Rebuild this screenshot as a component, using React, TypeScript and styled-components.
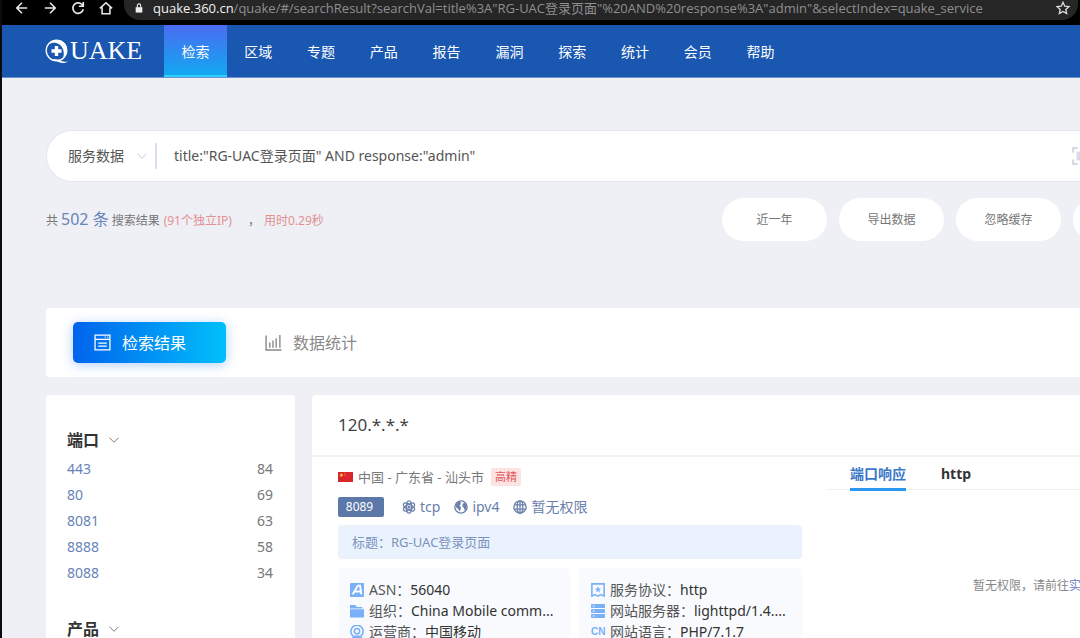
import React from "react";
import styled, { createGlobalStyle, css } from "styled-components";

const GlobalStyle = createGlobalStyle`
  * { box-sizing: border-box; }
  body {
    margin: 0;
    background: #eff0f5;
    color: #666;
    font: 14px/20px "Noto Sans", "Noto Sans CJK SC", sans-serif;
  }
  button, input, select { font: inherit; color: inherit; border: 0; padding: 0; background: none; }
  button { cursor: pointer; }
  a { color: inherit; text-decoration: none; }
  h1, h2, p, ul, dl, dd { margin: 0; padding: 0; font-weight: inherit; font-size: inherit; }
`;

const Page = styled.div`
  height: 100vh;
  overflow: hidden;
  border-left: 2px solid #0b0b0d;
`;

/* Browser bar */
const BrowserBar = styled.div`
  display: flex;
  height: 25px;
  padding: 0 2px 5px 12px;
  background: #000;
  color: #e8e8e8;
`;
const BrowserButtons = styled.div`
  display: flex;
  gap: 12px;
  align-items: center;
  margin-right: 10px;
`;
const BrowserButton = styled.button`
  display: flex;
  align-items: center;
  justify-content: center;
  width: 16px;
  height: 16px;
  margin-top: -4px;
`;
const AddressBar = styled.div`
  display: flex;
  flex: 1;
  min-width: 0;
  align-items: center;
  gap: 9px;
  padding: 0 8px 4px 10px;
  border-radius: 0 0 16px 16px;
  background: #262627;
  color: #8f8f90;
`;
const Address = styled.span`
  flex: 1;
  font: 13px/16px "Open Sans", "Noto Sans CJK SC", sans-serif;
  white-space: nowrap;
  strong { color: #f2f2f2; font-weight: 400; }
`;

/* Site header */
const Header = styled.header`
  display: flex;
  height: 53px;
  background: #1957b0;
  border-bottom: 1px solid #6b93cf;
  color: #fff;
`;
const Logo = styled.a`
  display: flex;
  align-items: center;
  width: 162px;
  padding-left: 42px;
  font: 26px/30px "Liberation Serif", serif;
`;
const Nav = styled.nav`
  display: grid;
  grid-template-columns: repeat(10, 1fr);
  width: 628px;
`;
const NavLink = styled.a<{ $active?: boolean }>`
  display: flex;
  align-items: center;
  justify-content: center;
  padding-top: 1px;
  ${(p) =>
    p.$active &&
    css`
      background: linear-gradient(#4a6cf0, #10aaf2);
      box-shadow: inset 0 -2px #2fd0ff;
    `}
`;

/* Search area */
const Content = styled.main`
  padding: 52px 0 0 44px;
`;
const SearchBox = styled.form`
  display: flex;
  align-items: center;
  height: 52px;
  padding-left: 21px;
  background: #fff;
  border: 1px solid #e6e7ee;
  border-right: 0;
  border-radius: 26px 0 0 26px;
`;
const SelectWrap = styled.label`
  display: flex;
  align-items: center;
  width: 89px;
  height: 26px;
  border-right: 2px solid #dcdfeb;
  color: #c0c4cc;
`;
const TypeSelect = styled.select`
  appearance: none;
  width: 68px;
  color: #555;
  outline: 0;
`;
const QueryInput = styled.input`
  flex: 1;
  padding-left: 17px;
  color: #555;
  outline: 0;
`;
const ScanButton = styled.button`
  width: 8px;
  height: 18px;
  overflow: hidden;
  color: #d5d7e6;
`;

const Summary = styled.div`
  display: flex;
  justify-content: space-between;
  align-items: center;
  margin-top: 16px;
  overflow: hidden;
`;
const Stats = styled.p`
  font-size: 12px;
  color: #777;
  white-space: nowrap;
`;
const Total = styled.span`
  margin: 0 3px;
  font-size: 16px;
  color: #6883b7;
`;
const Warn = styled.span`
  margin-left: 4px;
  color: #e28f92;
`;
const Comma = styled.span`
  margin-left: 16px;
`;
const Actions = styled.div`
  display: flex;
  flex: none;
  gap: 12px;
  margin-right: -98px;
`;
const Pill = styled.button`
  width: 105px;
  height: 43px;
  border-radius: 22px;
  background: #fff;
  font-size: 12px;
  color: #777;
`;

/* View switch */
const ViewTabs = styled.div`
  display: flex;
  gap: 39px;
  margin-top: 67px;
  padding: 14px 0 14px 27px;
  background: #fff;
  border-radius: 4px 0 0 4px;
`;
const ViewTab = styled.button<{ $active?: boolean }>`
  display: flex;
  align-items: center;
  gap: 11px;
  height: 41px;
  font-size: 16px;
  color: #888;
  ${(p) =>
    p.$active &&
    css`
      width: 153px;
      padding-left: 21px;
      color: #fff;
      border-radius: 5px;
      background: linear-gradient(90deg, #0163ec, #01bffb);
      box-shadow: 0 2px 12px rgba(30, 120, 240, 0.35);
    `}
`;

const Columns = styled.div`
  display: flex;
  align-items: flex-start;
  gap: 17px;
  margin-top: 18px;
`;

/* Facets */
const Sidebar = styled.aside`
  flex: none;
  width: 249px;
  padding: 34px 22px 34px 21px;
  background: #fff;
  border-radius: 4px;
`;
const Facet = styled.section`
  margin-bottom: 32px;
`;
const FacetToggle = styled.button`
  display: flex;
  align-items: center;
  gap: 9px;
  height: 22px;
  margin-bottom: 5px;
  font-size: 16px;
  font-weight: 700;
  color: #333;
  svg { color: #777; }
`;
const FacetTable = styled.table`
  width: 100%;
  border-collapse: collapse;
  td { height: 26px; padding: 0; color: #777; }
  td:first-child { color: #6883b7; }
  td:last-child { text-align: right; }
`;

/* Result card */
const Card = styled.article`
  flex: 1;
  min-width: 0;
  background: #fff;
  border-radius: 4px 0 0 4px;
`;
const CardTitle = styled.h2`
  padding: 16px 26px;
  border-bottom: 2px solid #f0f4f9;
  font-size: 17px;
  line-height: 28px;
  color: #444;
`;
const CardBody = styled.div`
  display: flex;
  gap: 25px;
  padding-left: 26px;
`;
const Details = styled.div`
  flex: none;
  width: 464px;
  padding: 10px 0 20px;
`;
const Location = styled.div`
  display: flex;
  align-items: center;
  gap: 5px;
  height: 20px;
  font-size: 13px;
  color: #777;
`;
const Precision = styled.span`
  margin-left: 2px;
  padding: 0 4px;
  border-radius: 2px;
  background: #fde2e2;
  color: #e2575a;
  font-size: 11px;
  line-height: 18px;
`;
const Protocols = styled.div`
  display: flex;
  align-items: center;
  gap: 14px;
  margin-top: 10px;
  color: #6a80ac;
`;
const Port = styled.span`
  width: 46px;
  margin-right: 4px;
  padding-right: 3px;
  border-radius: 2px;
  background: #5b78a9;
  color: #fff;
  font-size: 12px;
  text-align: center;
`;
const Protocol = styled.span`
  display: flex;
  align-items: center;
  gap: 4px;
`;
const PageTitle = styled.p`
  margin-top: 8px;
  padding: 7px 14px;
  border-radius: 4px;
  background: #eaf2fd;
  font-size: 13px;
  color: #7b93be;
`;
const Facts = styled.div`
  display: flex;
  gap: 9px;
  margin-top: 9px;
`;
const FactList = styled.ul<{ $width: number }>`
  width: ${(p) => p.$width}px;
  padding: 11px 12px;
  border-radius: 4px;
  background: #f8fafd;
  list-style: none;
`;
const Fact = styled.li`
  display: flex;
  align-items: center;
  gap: 5px;
  height: 21px;
  color: #555;
  span { overflow: hidden; text-overflow: ellipsis; white-space: nowrap; }
  b { font-weight: 400; color: #333; }
`;

const Response = styled.div`
  flex: 1;
  min-width: 0;
  overflow: hidden;
`;
const ResponseTabs = styled.div`
  display: flex;
  gap: 35px;
  height: 33px;
  padding-left: 23px;
  border-bottom: 1px solid #ecf1f3;
`;
const ResponseTab = styled.button<{ $active?: boolean }>`
  height: 34px;
  padding-top: 2px;
  font-weight: 700;
  color: ${(p) => (p.$active ? "#3a78c8" : "#333")};
  border-bottom: 3px solid ${(p) => (p.$active ? "#2b97f0" : "transparent")};
`;
const Notice = styled.p`
  margin-top: 86px;
  padding-left: 146px;
  font-size: 12px;
  color: #888;
  white-space: nowrap;
  a { color: #6a80c0; }
`;

type IconProps = { size?: number; box?: string; fill?: string; sw?: number; children: React.ReactNode };
const Icon = ({ size = 14, box = "0 0 16 16", fill = "none", sw = 1.3, children }: IconProps) => (
  <IconSvg
    width={size}
    height={size}
    viewBox={box}
    fill={fill}
    stroke={fill === "none" ? "currentColor" : "none"}
    strokeWidth={sw}
    aria-hidden="true"
  >
    {children}
  </IconSvg>
);
const IconSvg = styled.svg`
  flex: none;
`;

const Chevron = () => (
  <Icon size={12}><path d="M2 5l6 6 6-6" /></Icon>
);

const BLUE = "#7ab0f8";

const FlagIcon = () => (
  <svg width="15" height="10" viewBox="0 0 15 10" aria-hidden="true">
    <rect width="15" height="10" fill="#d8262a" />
    <path d="M3.4 1l.6 1.5h1.6L4.3 3.5l.5 1.6-1.4-1-1.4 1 .5-1.6L1.200 2.500h1.600z" fill="#f8d648" />
    <circle cx="6.800" cy="1.600" r=".6" fill="#f8b03c" />
    <circle cx="7.500" cy="3.500" r=".5" fill="#f8b03c" />
  </svg>
);

/* Ring with a heavier upper-right arc, a plus inside and the tail of the Q */
const LogoMark = () => (
  <svg width="26" height="26" viewBox="0 0 26 26" fill="none" stroke="#fff" aria-hidden="true">
    <circle cx="12.500" cy="12.500" r="10.300" strokeWidth="1.300" />
    <path d="M4.500 6.500C8.500 1 17 .5 21.300 6c3 4.500 2 10.500-2.300 14.500 1.800-5.500.5-11-3.500-14C12 4 8 4.200 4.500 6.500z" fill="#fff" stroke="none" />
    <path d="M9 21.500c2.500-.5 4.500-.5 6.500.5 2.200 1.300 4.500 2.500 9 1.200-3 2.300-7 2.200-10 .8-2-.9-3.500-1.500-5.500-2.500z" fill="#fff" stroke="none" />
    <path d="M12.500 8v10M7.500 13h10" strokeWidth="3.400" />
  </svg>
);

const AtomIcon = () => (
  <Icon size={14} sw={1.500}>
    <ellipse cx="8" cy="8" rx="7" ry="3" transform="rotate(30 8 8)" />
    <ellipse cx="8" cy="8" rx="7" ry="3" transform="rotate(90 8 8)" />
    <ellipse cx="8" cy="8" rx="7" ry="3" transform="rotate(150 8 8)" />
    <circle cx="8" cy="8" r="1" />
  </Icon>
);
const EarthIcon = () => (
  <Icon size={14} sw={1.500}>
    <circle cx="8" cy="8" r="7" />
    <path
      d="M5 2l3 .5-.5 2.500L6 6.500l1.500 1 .5 2L6.500 13 5 10.500 2 8 2.500 4.500zM10 4l3-.5 1.500 4-1 4-1.500.5-.5-3-2-1.500z"
      fill="currentColor"
      stroke="none"
    />
  </Icon>
);
const GlobeIcon = () => (
  <Icon size={14} sw={1.500}>
    <circle cx="8" cy="8" r="7" />
    <ellipse cx="8" cy="8" rx="3.200" ry="7" />
    <path d="M1.500 5.500h13M1.500 10.500h13M8 1v14" />
  </Icon>
);

const AsnIcon = () => (
  <Icon fill={BLUE}>
    <rect width="16" height="16" rx="1" />
    <path d="M3 13L9 3h2.500l1.500 10M5.500 9.800h6" fill="none" stroke="#fff" strokeWidth="2.200" />
  </Icon>
);
const FolderIcon = () => (
  <Icon fill={BLUE}><path d="M0 1h6l2 2.500h6V5H0zM0 6h16v9.500H0z" /></Icon>
);
const CarrierIcon = () => (
  <Icon>
    <g stroke={BLUE} strokeWidth="1.800">
      <path d="M4 13a7 7 0 1 1 8 0" />
      <circle cx="8" cy="7" r="3" />
      <path d="M2.500 15.500c2-4 9-4 11 0z" fill={BLUE} />
    </g>
  </Icon>
);
const ServiceIcon = () => (
  <Icon>
    <path d="M1 1h14v14l-3.500-1.800L8 15l-3.500-1.800L1 15z" stroke={BLUE} strokeWidth="1.800" />
    <path d="M8 3.800l1 2.400 2.500.2-1.900 1.600.6 2.500L8 9.200l-2.200 1.300.6-2.500-1.900-1.600 2.500-.2z" fill={BLUE} stroke="none" />
  </Icon>
);
const ServerIcon = () => (
  <Icon fill={BLUE}>
    <rect width="16" height="4.600" rx="1" />
    <rect y="5.700" width="16" height="4.600" rx="1" />
    <rect y="11.400" width="16" height="4.600" rx="1" />
    <path d="M2 2.300h2M2 8h2M2 13.700h2" stroke="#fff" strokeWidth="1.200" />
  </Icon>
);
const LangBadge = styled.i`
  flex: none;
  width: 14px;
  font: 700 10px/20px "Liberation Sans", sans-serif;
  color: ${BLUE};
`;

const navItems = ["检索", "区域", "专题", "产品", "报告", "漏洞", "探索", "统计", "会员", "帮助"];
const ports = [["443", 84], ["80", 69], ["8081", 63], ["8888", 58], ["8088", 34]];

const networkFacts = [
  { icon: <AsnIcon />, label: "ASN", value: "56040" },
  { icon: <FolderIcon />, label: "组织", value: "China Mobile comm..." },
  { icon: <CarrierIcon />, label: "运营商", value: "中国移动" },
];
const serviceFacts = [
  { icon: <ServiceIcon />, label: "服务协议", value: "http" },
  { icon: <ServerIcon />, label: "网站服务器", value: "lighttpd/1.4...." },
  { icon: <LangBadge>CN</LangBadge>, label: "网站语言", value: "PHP/7.1.7" },
];

const FactBox = ({ width, facts }: { width: number; facts: typeof networkFacts }) => (
  <FactList $width={width}>
    {facts.map((f) => (
      <Fact key={f.label}>
        {f.icon}
        <span>{f.label}：<b>{f.value}</b></span>
      </Fact>
    ))}
  </FactList>
);

export default function App() {
  return (
    <>
      <GlobalStyle />
      <Page>
        <BrowserBar>
          <BrowserButtons>
            <BrowserButton aria-label="后退"><Icon sw={1.800}><path d="M14 8H2M8 2L2 8l6 6" /></Icon></BrowserButton>
            <BrowserButton aria-label="前进"><Icon sw={1.800}><path d="M2 8h12M8 2l6 6-6 6" /></Icon></BrowserButton>
            <BrowserButton aria-label="刷新">
              <Icon sw={1.900}><path d="M14 9.500A6 6 0 1 1 12.500 4L14 5.500M14 1v5H9" /></Icon>
            </BrowserButton>
            <BrowserButton aria-label="主页">
              <Icon sw={1.800}><path d="M1 8.500L8 2l7 6.500M3.500 7v7.500h9V7" /></Icon>
            </BrowserButton>
          </BrowserButtons>
          <AddressBar>
            <Icon size={10} box="0 0 10 12" fill="currentColor">
              <path d="M1 5h8v6.500H1z" fill="#eee" />
              <path d="M3 5V3a2 2 0 0 1 4 0v2" fill="none" stroke="#eee" strokeWidth="1.300" />
            </Icon>
            <Address>
              <strong>quake.360.cn</strong>
              /quake/#/searchResult?searchVal=title%3A"RG-UAC登录页面"%20AND%20response%3A"admin"&amp;selectIndex=quake_service
            </Address>
            <Icon size={14} sw={1.500}>
              <path d="M8 1.500l2 4.400 4.800.5-3.600 3.200 1 4.700L8 11.900l-4.200 2.400 1-4.700L1.200 6.400 6 5.900z" stroke="#ddd" />
            </Icon>
          </AddressBar>
        </BrowserBar>

        <Header>
          <Logo href="#" aria-label="QUAKE"><LogoMark />UAKE</Logo>
          <Nav>
            {navItems.map((item, i) => (
              <NavLink key={item} href="#" $active={i === 0}>{item}</NavLink>
            ))}
          </Nav>
        </Header>

        <Content>
          <SearchBox>
            <SelectWrap>
              <TypeSelect aria-label="数据类型"><option>服务数据</option></TypeSelect>
              <Chevron />
            </SelectWrap>
            <QueryInput aria-label="检索" defaultValue={'title:"RG-UAC登录页面" AND response:"admin"'} />
            <ScanButton type="button" aria-label="全屏">
              <Icon size={18} sw={1.800}>
                <path d="M5 1H1v4M1 11v4h4M11 1h4v4M15 11v4h-4M5 5h6v6H5zM7 5v6" />
              </Icon>
            </ScanButton>
          </SearchBox>

          <Summary>
            <Stats>
              共<Total>502 条</Total>搜索结果<Warn>(91个独立IP)</Warn>
              <Comma>，</Comma>
              <Warn>用时0.29秒</Warn>
            </Stats>
            <Actions>
              <Pill>近一年</Pill>
              <Pill>导出数据</Pill>
              <Pill>忽略缓存</Pill>
              <Pill />
            </Actions>
          </Summary>

          <ViewTabs>
            <ViewTab $active>
              <Icon size={17} sw={1.200}>
                <path d="M1 1h14v14H1zM1 5h14M4 8.500h8M4 11.500h8M10 3h1M12.500 3h1" />
              </Icon>
              检索结果
            </ViewTab>
            <ViewTab>
              <Icon size={17} sw={1.300}>
                <path d="M1 1.500V15h14.500M4.500 13V8M7.500 13V6M10.500 13V4M14 13V1" />
              </Icon>
              数据统计
            </ViewTab>
          </ViewTabs>

          <Columns>
            <Sidebar>
              <Facet>
                <FacetToggle>端口 <Chevron /></FacetToggle>
                <FacetTable>
                  <tbody>
                    {ports.map(([port, count]) => (
                      <tr key={port}>
                        <td><a href="#">{port}</a></td>
                        <td>{count}</td>
                      </tr>
                    ))}
                  </tbody>
                </FacetTable>
              </Facet>
              <Facet>
                <FacetToggle>产品 <Chevron /></FacetToggle>
              </Facet>
            </Sidebar>

            <Card>
              <CardTitle>120.*.*.*</CardTitle>
              <CardBody>
                <Details>
                  <Location>
                    <FlagIcon />
                    中国 - 广东省 - 汕头市
                    <Precision>高精</Precision>
                  </Location>
                  <Protocols>
                    <Port>8089</Port>
                    <Protocol><AtomIcon />tcp</Protocol>
                    <Protocol><EarthIcon />ipv4</Protocol>
                    <Protocol><GlobeIcon />暂无权限</Protocol>
                  </Protocols>
                  <PageTitle>标题：RG-UAC登录页面</PageTitle>
                  <Facts>
                    <FactBox width={232} facts={networkFacts} />
                    <FactBox width={223} facts={serviceFacts} />
                  </Facts>
                </Details>
                <Response>
                  <ResponseTabs>
                    <ResponseTab $active>端口响应</ResponseTab>
                    <ResponseTab>http</ResponseTab>
                  </ResponseTabs>
                  <Notice>暂无权限，请前往<a href="#">实</a></Notice>
                </Response>
              </CardBody>
            </Card>
          </Columns>
        </Content>
      </Page>
    </>
  );
}
